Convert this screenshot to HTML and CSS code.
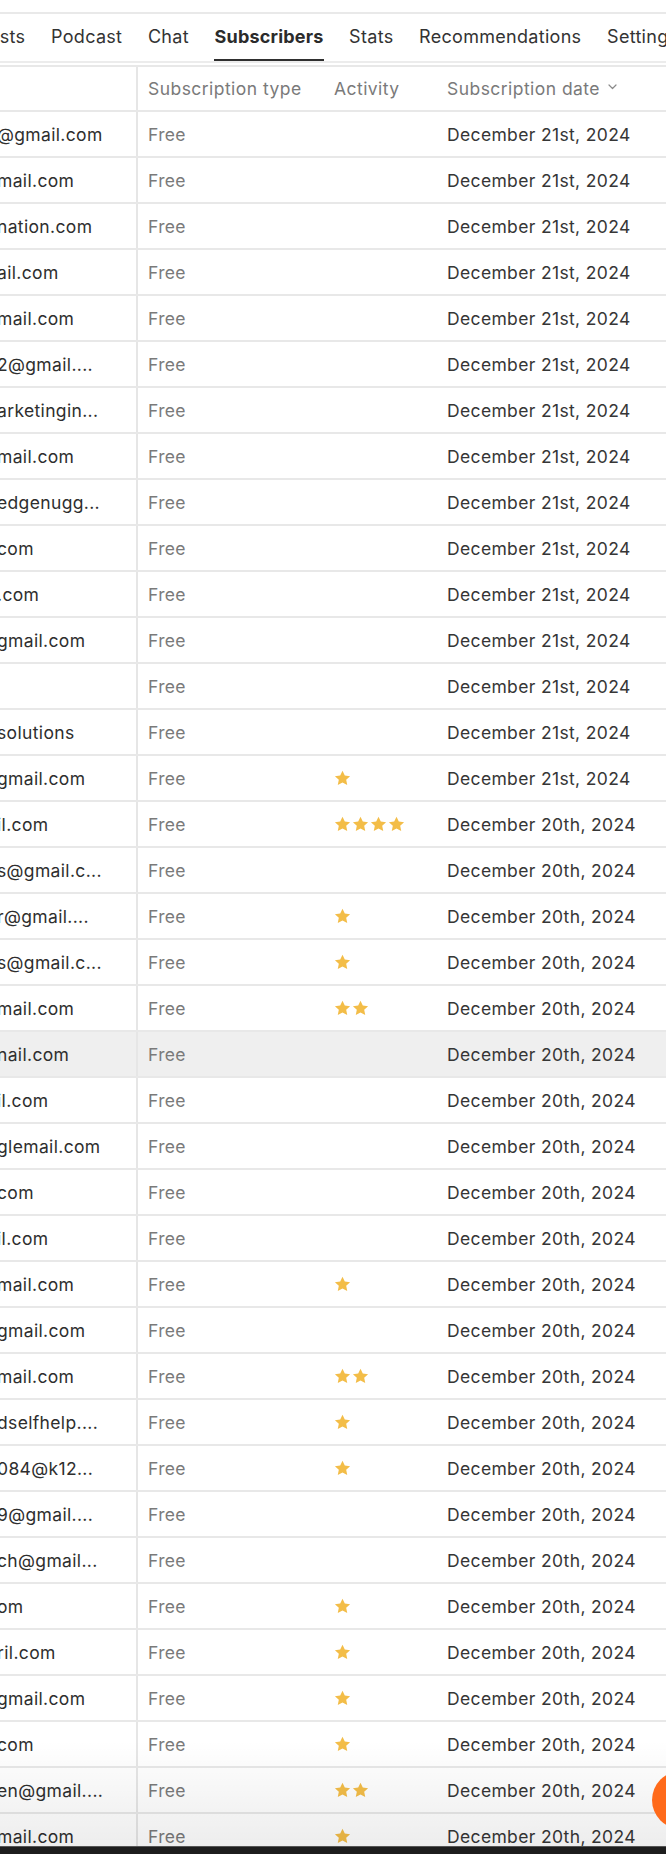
FILE: index.html
```html
<!DOCTYPE html>
<html lang="en">
<head>
<meta charset="utf-8">
<title>Subscribers</title>
<link rel="stylesheet" href="styles.css">
</head>
<body>
<div class="page">
  <div class="topline"></div>
  <nav class="tabs">
    <span class="tab">Posts</span>
    <span class="tab">Podcast</span>
    <span class="tab">Chat</span>
    <span class="tab active">Subscribers</span>
    <span class="tab">Stats</span>
    <span class="tab">Recommendations</span>
    <span class="tab">Settings</span>
  </nav>
  <div class="table">
    <div class="row head">
      <div class="c email"></div>
      <div class="c type">Subscription type</div>
      <div class="c act">Activity</div>
      <div class="c date">Subscription date <svg class="chev" width="9" height="6" viewBox="0 0 9 6"><path d="M1 1l3.5 3.5L8 1" fill="none" stroke="#8a8a8a" stroke-width="1.2" stroke-linecap="round" stroke-linejoin="round"/></svg></div>
    </div>
    <div id="rows"></div>
  </div>
  <div class="fade"></div>
  <div class="fab"></div>
  <div class="bottombar"></div>
</div>
<script src="app.js"></script>
</body>
</html>
```

FILE: app.js
```js
var d21 = "December 21st, 2024", d20 = "December 20th, 2024";
var data = [
  ["@gmail.com",0,d21],["mail.com",0,d21],["nation.com",0,d21],["ail.com",0,d21],
  ["mail.com",0,d21],["2@gmail....",0,d21],["arketingin...",0,d21],["mail.com",0,d21],
  ["edgenugg...",0,d21],["com",0,d21],[".com",0,d21],["gmail.com",0,d21],
  ["",0,d21],["solutions",0,d21],["gmail.com",1,d21],["il.com",4,d20],
  ["s@gmail.c...",0,d20],["r@gmail....",1,d20],["s@gmail.c...",1,d20],["mail.com",2,d20],
  ["nail.com",0,d20,1],["il.com",0,d20],["glemail.com",0,d20],["com",0,d20],
  ["il.com",0,d20],["mail.com",1,d20],["gmail.com",0,d20],["mail.com",2,d20],
  ["dselfhelp....",1,d20],["084@k12...",1,d20],["9@gmail....",0,d20],["ch@gmail...",0,d20],
  ["om",1,d20],["ril.com",1,d20],["gmail.com",1,d20],["com",1,d20],
  ["en@gmail....",2,d20],["mail.com",1,d20]
];
var star = '<svg class="star" width="17" height="16" viewBox="0 0 24 23"><path d="M12 1l3.3 7 7.6.9-5.6 5.2 1.5 7.5L12 17.9l-6.8 3.7 1.5-7.5L1.1 8.9l7.6-.9z" fill="#f3bd48"/></svg>';
var html = "";
data.forEach(function (r) {
  var s = "";
  for (var i = 0; i < r[1]; i++) s += star;
  html += '<div class="row' + (r[3] ? ' hl' : '') + '">' +
    '<div class="c email">' + r[0] + '</div>' +
    '<div class="c type">Free</div>' +
    '<div class="c act">' + s + '</div>' +
    '<div class="c date">' + r[2] + '</div></div>';
});
document.getElementById("rows").innerHTML = html;
```

FILE: styles.css
```css
html, body {
  margin: 0;
  padding: 0;
  height: 1854px;
  overflow: hidden;
  background: #fff;
}
.page {
  position: relative;
  width: 666px;
  height: 1854px;
  overflow: hidden;
  font-family: Inter, "Noto Sans", sans-serif;
  color: #333;
}
.topline {
  margin-top: 12px;
  height: 2px;
  background: #e9e9e9;
}
.tabs {
  display: flex;
  gap: 25.6px;
  height: 47px;
  margin-left: -23px;
  border-bottom: 2px solid #ececec;
  white-space: nowrap;
}
.tab {
  display: flex;
  align-items: center;
  font-size: 18px;
  letter-spacing: 0.3px;
  color: #333;
  box-sizing: border-box;
  border-bottom: 2px solid transparent;
  height: 47px;
}
.tab.active {
  font-weight: 700;
  letter-spacing: 0.2px;
  color: #2b2b2b;
  border-bottom: 2px solid #2f2f2f;
}
.table {
  margin-top: 2px;
  border-top: 2px solid #e8e8e8;
}
.row {
  display: grid;
  grid-template-columns: 138px 196px 113px 1fr;
  height: 46px;
  box-sizing: border-box;
  border-bottom: 2px solid #e8e8e8;
  font-size: 17.5px;
  letter-spacing: 0.35px;
}
.row.head {
  height: 45px;
  letter-spacing: 0.45px;
}
.row.hl {
  background: #efefef;
}
.c {
  display: flex;
  align-items: center;
  white-space: nowrap;
  overflow: hidden;
}
.email {
  border-right: 2px solid #e6e6e6;
  color: #2e2e2e;
  text-indent: -3px;
}
.type {
  padding-left: 10px;
  color: #7a7a7a;
}
.head .type, .head .act, .head .date {
  color: #7a7a7a;
}
.act {
  gap: 1px;
}
.date {
  color: #363636;
}
.chev {
  margin-left: 8px;
  margin-top: -4px;
}
.star {
  display: block;
}
.fade {
  position: absolute;
  left: 0;
  right: 0;
  top: 1740px;
  height: 107px;
  background: linear-gradient(to bottom, rgba(0,0,0,0), rgba(0,0,0,0.07));
  pointer-events: none;
}
.fab {
  position: absolute;
  left: 652px;
  top: 1771px;
  width: 58px;
  height: 58px;
  border-radius: 50%;
  background: #ff6a1a;
}
.bottombar {
  position: absolute;
  left: 0;
  right: 0;
  top: 1846px;
  height: 8px;
  background: #1d1d1d;
  border-top: 1px solid #555;
}
```
